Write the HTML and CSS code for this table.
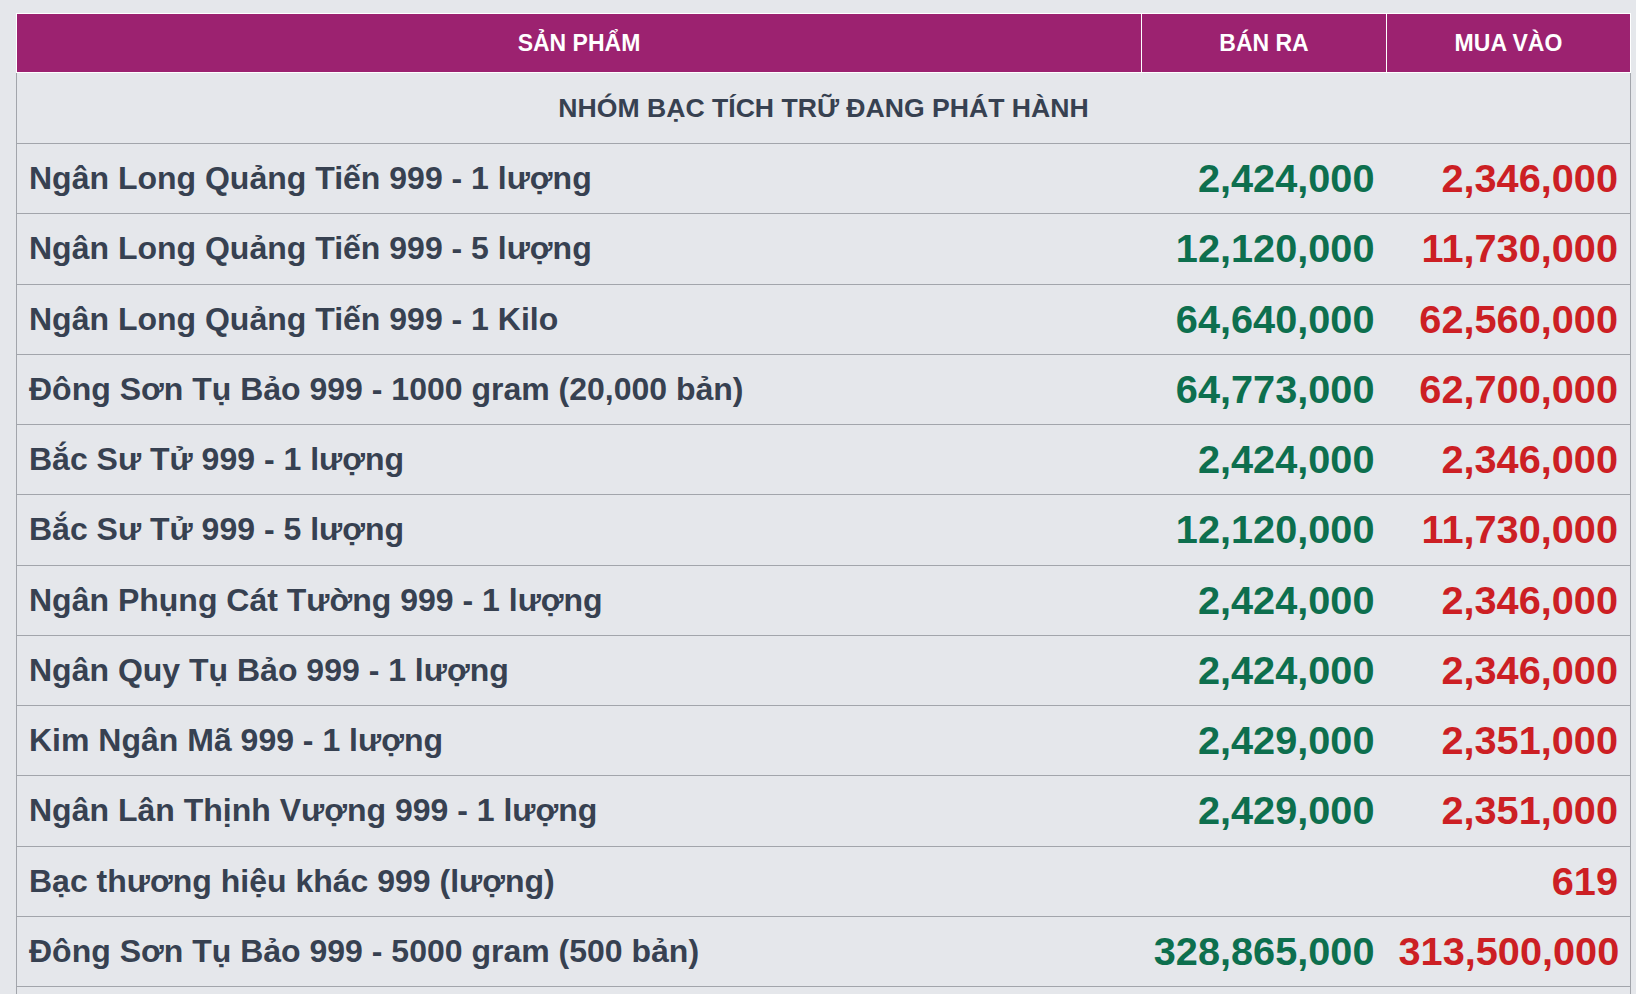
FILE: index.html
```html
<!DOCTYPE html>
<html lang="vi">
<head>
<meta charset="utf-8">
<title>Giá bạc</title>
<link rel="stylesheet" href="styles.css">
</head>
<body>
<div class="wrap">
<table class="price-table">
  <colgroup>
    <col class="c-name">
    <col class="c-sell">
    <col class="c-buy">
  </colgroup>
  <thead>
    <tr>
      <th>SẢN PHẨM</th>
      <th>BÁN RA</th>
      <th>MUA VÀO</th>
    </tr>
  </thead>
  <tbody>
    <tr class="group"><td colspan="3">NHÓM BẠC TÍCH TRỮ ĐANG PHÁT HÀNH</td></tr>
    <tr><td class="name">Ngân Long Quảng Tiến 999 - 1 lượng</td><td class="sell">2,424,000</td><td class="buy">2,346,000</td></tr>
    <tr><td class="name">Ngân Long Quảng Tiến 999 - 5 lượng</td><td class="sell">12,120,000</td><td class="buy">11,730,000</td></tr>
    <tr><td class="name">Ngân Long Quảng Tiến 999 - 1 Kilo</td><td class="sell">64,640,000</td><td class="buy">62,560,000</td></tr>
    <tr><td class="name">Đông Sơn Tụ Bảo 999 - 1000 gram (20,000 bản)</td><td class="sell">64,773,000</td><td class="buy">62,700,000</td></tr>
    <tr><td class="name">Bắc Sư Tử 999 - 1 lượng</td><td class="sell">2,424,000</td><td class="buy">2,346,000</td></tr>
    <tr><td class="name">Bắc Sư Tử 999 - 5 lượng</td><td class="sell">12,120,000</td><td class="buy">11,730,000</td></tr>
    <tr><td class="name">Ngân Phụng Cát Tường 999 - 1 lượng</td><td class="sell">2,424,000</td><td class="buy">2,346,000</td></tr>
    <tr><td class="name">Ngân Quy Tụ Bảo 999 - 1 lượng</td><td class="sell">2,424,000</td><td class="buy">2,346,000</td></tr>
    <tr><td class="name">Kim Ngân Mã 999 - 1 lượng</td><td class="sell">2,429,000</td><td class="buy">2,351,000</td></tr>
    <tr><td class="name">Ngân Lân Thịnh Vượng 999 - 1 lượng</td><td class="sell">2,429,000</td><td class="buy">2,351,000</td></tr>
    <tr><td class="name">Bạc thương hiệu khác 999 (lượng)</td><td class="sell"></td><td class="buy">619</td></tr>
    <tr><td class="name">Đông Sơn Tụ Bảo 999 - 5000 gram (500 bản)</td><td class="sell">328,865,000</td><td class="buy">313,500,000</td></tr>
    <tr><td class="name"></td><td class="sell"></td><td class="buy"></td></tr>
  </tbody>
</table>
</div>
</body>
</html>
```

FILE: styles.css
```css
html, body {
  margin: 0;
  padding: 0;
  background: #e5e7eb;
}

body {
  font-family: "Liberation Sans", Arial, sans-serif;
  color: #374151;
  overflow: hidden;
}

.wrap {
  padding: 13px 6px 0 16px;
}

.price-table {
  width: 1614px;
  border-collapse: collapse;
  table-layout: fixed;
}

.c-name { width: 1125px; }
.c-sell { width: 245px; }
.c-buy  { width: 244px; }

.price-table th {
  background: #9c2270;
  color: #ffffff;
  font-size: 23px;
  font-weight: 700;
  height: 58px;
  padding: 0;
  border: 1px solid #ffffff;
  text-align: center;
  vertical-align: middle;
}

.price-table td {
  border-top: 1px solid #a2a5ab;
  border-bottom: 1px solid #a2a5ab;
  height: 69.25px;
  padding: 0 12px;
  vertical-align: middle;
  white-space: nowrap;
}

.price-table td:first-child {
  border-left: 1px solid #a2a5ab;
}

.price-table td:last-child {
  border-right: 1px solid #a2a5ab;
}

.group td {
  text-align: center;
  font-size: 26.6px;
  font-weight: 700;
  color: #374151;
  height: 70px;
}

.name {
  font-size: 32px;
  font-weight: 700;
  color: #374151;
  padding-left: 11px;
}

.sell, .buy {
  text-align: right;
  font-size: 39.7px;
  font-weight: 700;
}

.sell { color: #0d6f4e; }
.buy  { color: #cc1f24; }
```
